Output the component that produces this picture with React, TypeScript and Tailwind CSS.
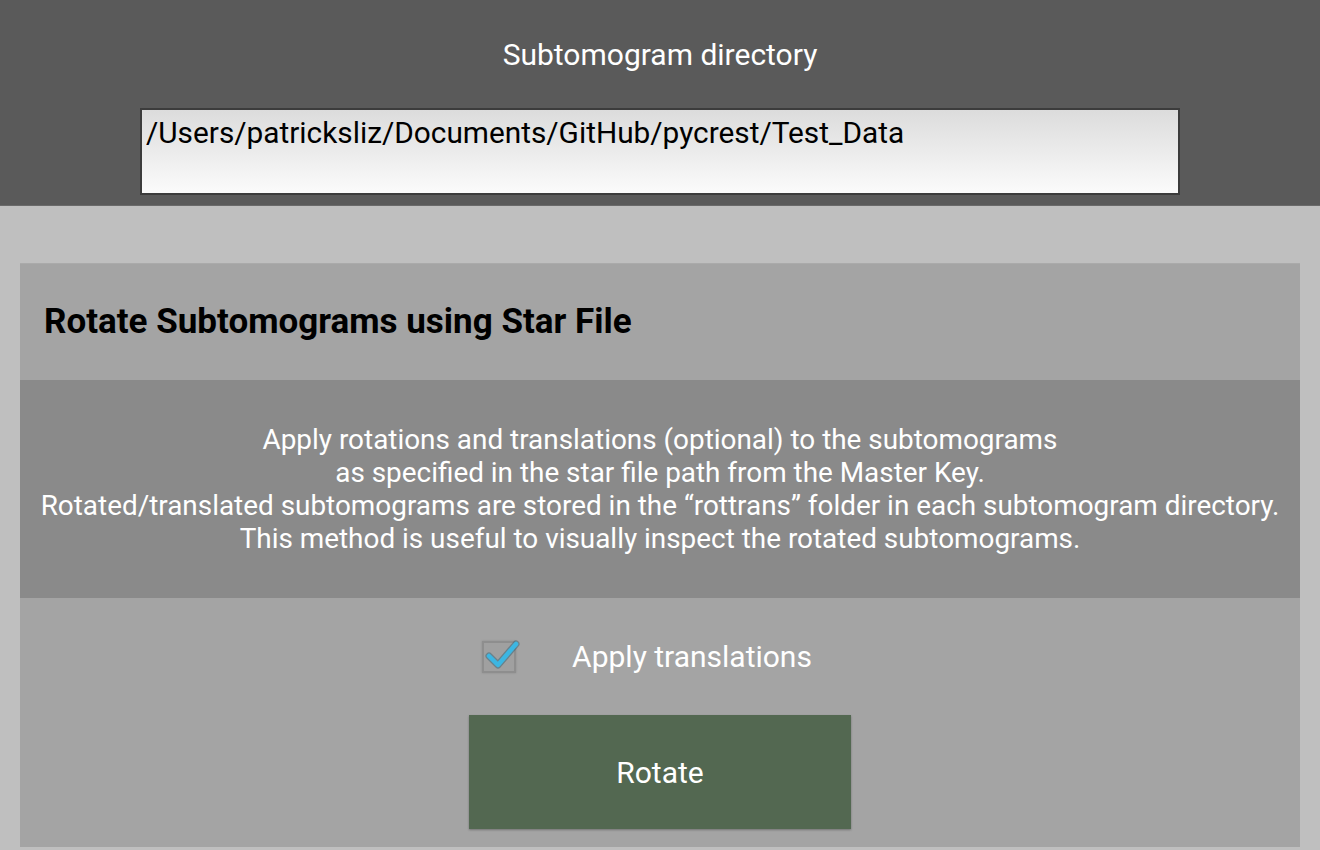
import React, { useState } from 'react'

export default function App() {
    const [applyTranslations, setApplyTranslations] = useState<boolean>(true);
    const [path, setPath] = useState<string>('/Users/patricksliz/Documents/GitHub/pycrest/Test_Data');

    return (
        <div className="w-[1320px] h-[850px] bg-[#bfbfbf] overflow-hidden font-['Roboto',sans-serif]">
            {/* directory header */}
            <div className="h-[206px] bg-[#5a5a5a] border-b border-[#6a6a6a] flex flex-col items-center pt-[37px]">
                <p className="text-white text-[30px] leading-[36px]">Subtomogram directory</p>
                <div className="mt-[35px] w-[1040px] h-[87px] border-2 border-[#3c3c3c] bg-gradient-to-b from-[#dcdcdc] to-[#fbfbfb]">
                    <input
                        value={path}
                        onChange={(e) => setPath(e.target.value)}
                        className="w-full bg-transparent outline-none text-black text-[29.8px] leading-[36px] px-[4px] pt-[5px]"
                    />
                </div>
            </div>

            <div className="px-[20px] pt-[57px]">
                <div className="bg-[#a4a4a4]">
                    <div className="h-[117px] flex items-center px-[24px] border-t border-[#aaaaaa]">
                        <h2 className="text-black font-bold text-[35px]">Rotate Subtomograms using Star File</h2>
                    </div>

                    <div className="h-[218px] bg-[#8a8a8a] flex flex-col items-center justify-center text-white text-[27.9px] leading-[33px] text-center">
                        <p>Apply rotations and translations (optional) to the subtomograms</p>
                        <p>as specified in the star file path from the Master Key.</p>
                        <p>Rotated/translated subtomograms are stored in the “rottrans” folder in each subtomogram directory.</p>
                        <p>This method is useful to visually inspect the rotated subtomograms.</p>
                    </div>

                    <div className="h-[249px] flex flex-col items-center pt-[36px]">
                        <label className="flex items-center gap-[56px] cursor-pointer ml-[-26px] leading-[45px]" onClick={() => setApplyTranslations(!applyTranslations)}>
                            <span className="relative w-[34px] h-[32px] border-2 border-[#8e8e8e] bg-[#a0a0a0] shadow-[0_0_2px_rgba(0,0,0,0.15)]">
                                {applyTranslations && (
                                    <svg viewBox="0 0 34 32" className="absolute left-[-2px] top-[-2px] w-[34px] h-[32px] overflow-visible">
                                        <path d="M7 15 L16 24 L34 3" fill="none" stroke="rgba(40,90,110,0.45)" strokeWidth="7" strokeLinecap="round" strokeLinejoin="round" />
                                        <path d="M7 15 L16 24 L34 3" fill="none" stroke="#3cb6e2" strokeWidth="4.5" strokeLinecap="round" strokeLinejoin="round" />
                                    </svg>
                                )}
                            </span>
                            <span className="text-white text-[30px]">Apply translations</span>
                        </label>

                        <button className="mt-[36px] w-[382px] h-[114px] bg-[#536851] text-white text-[30px] shadow-[0_1px_2px_rgba(0,0,0,0.3)]">
                            Rotate
                        </button>
                    </div>
                </div>
            </div>
        </div>
    )
}
